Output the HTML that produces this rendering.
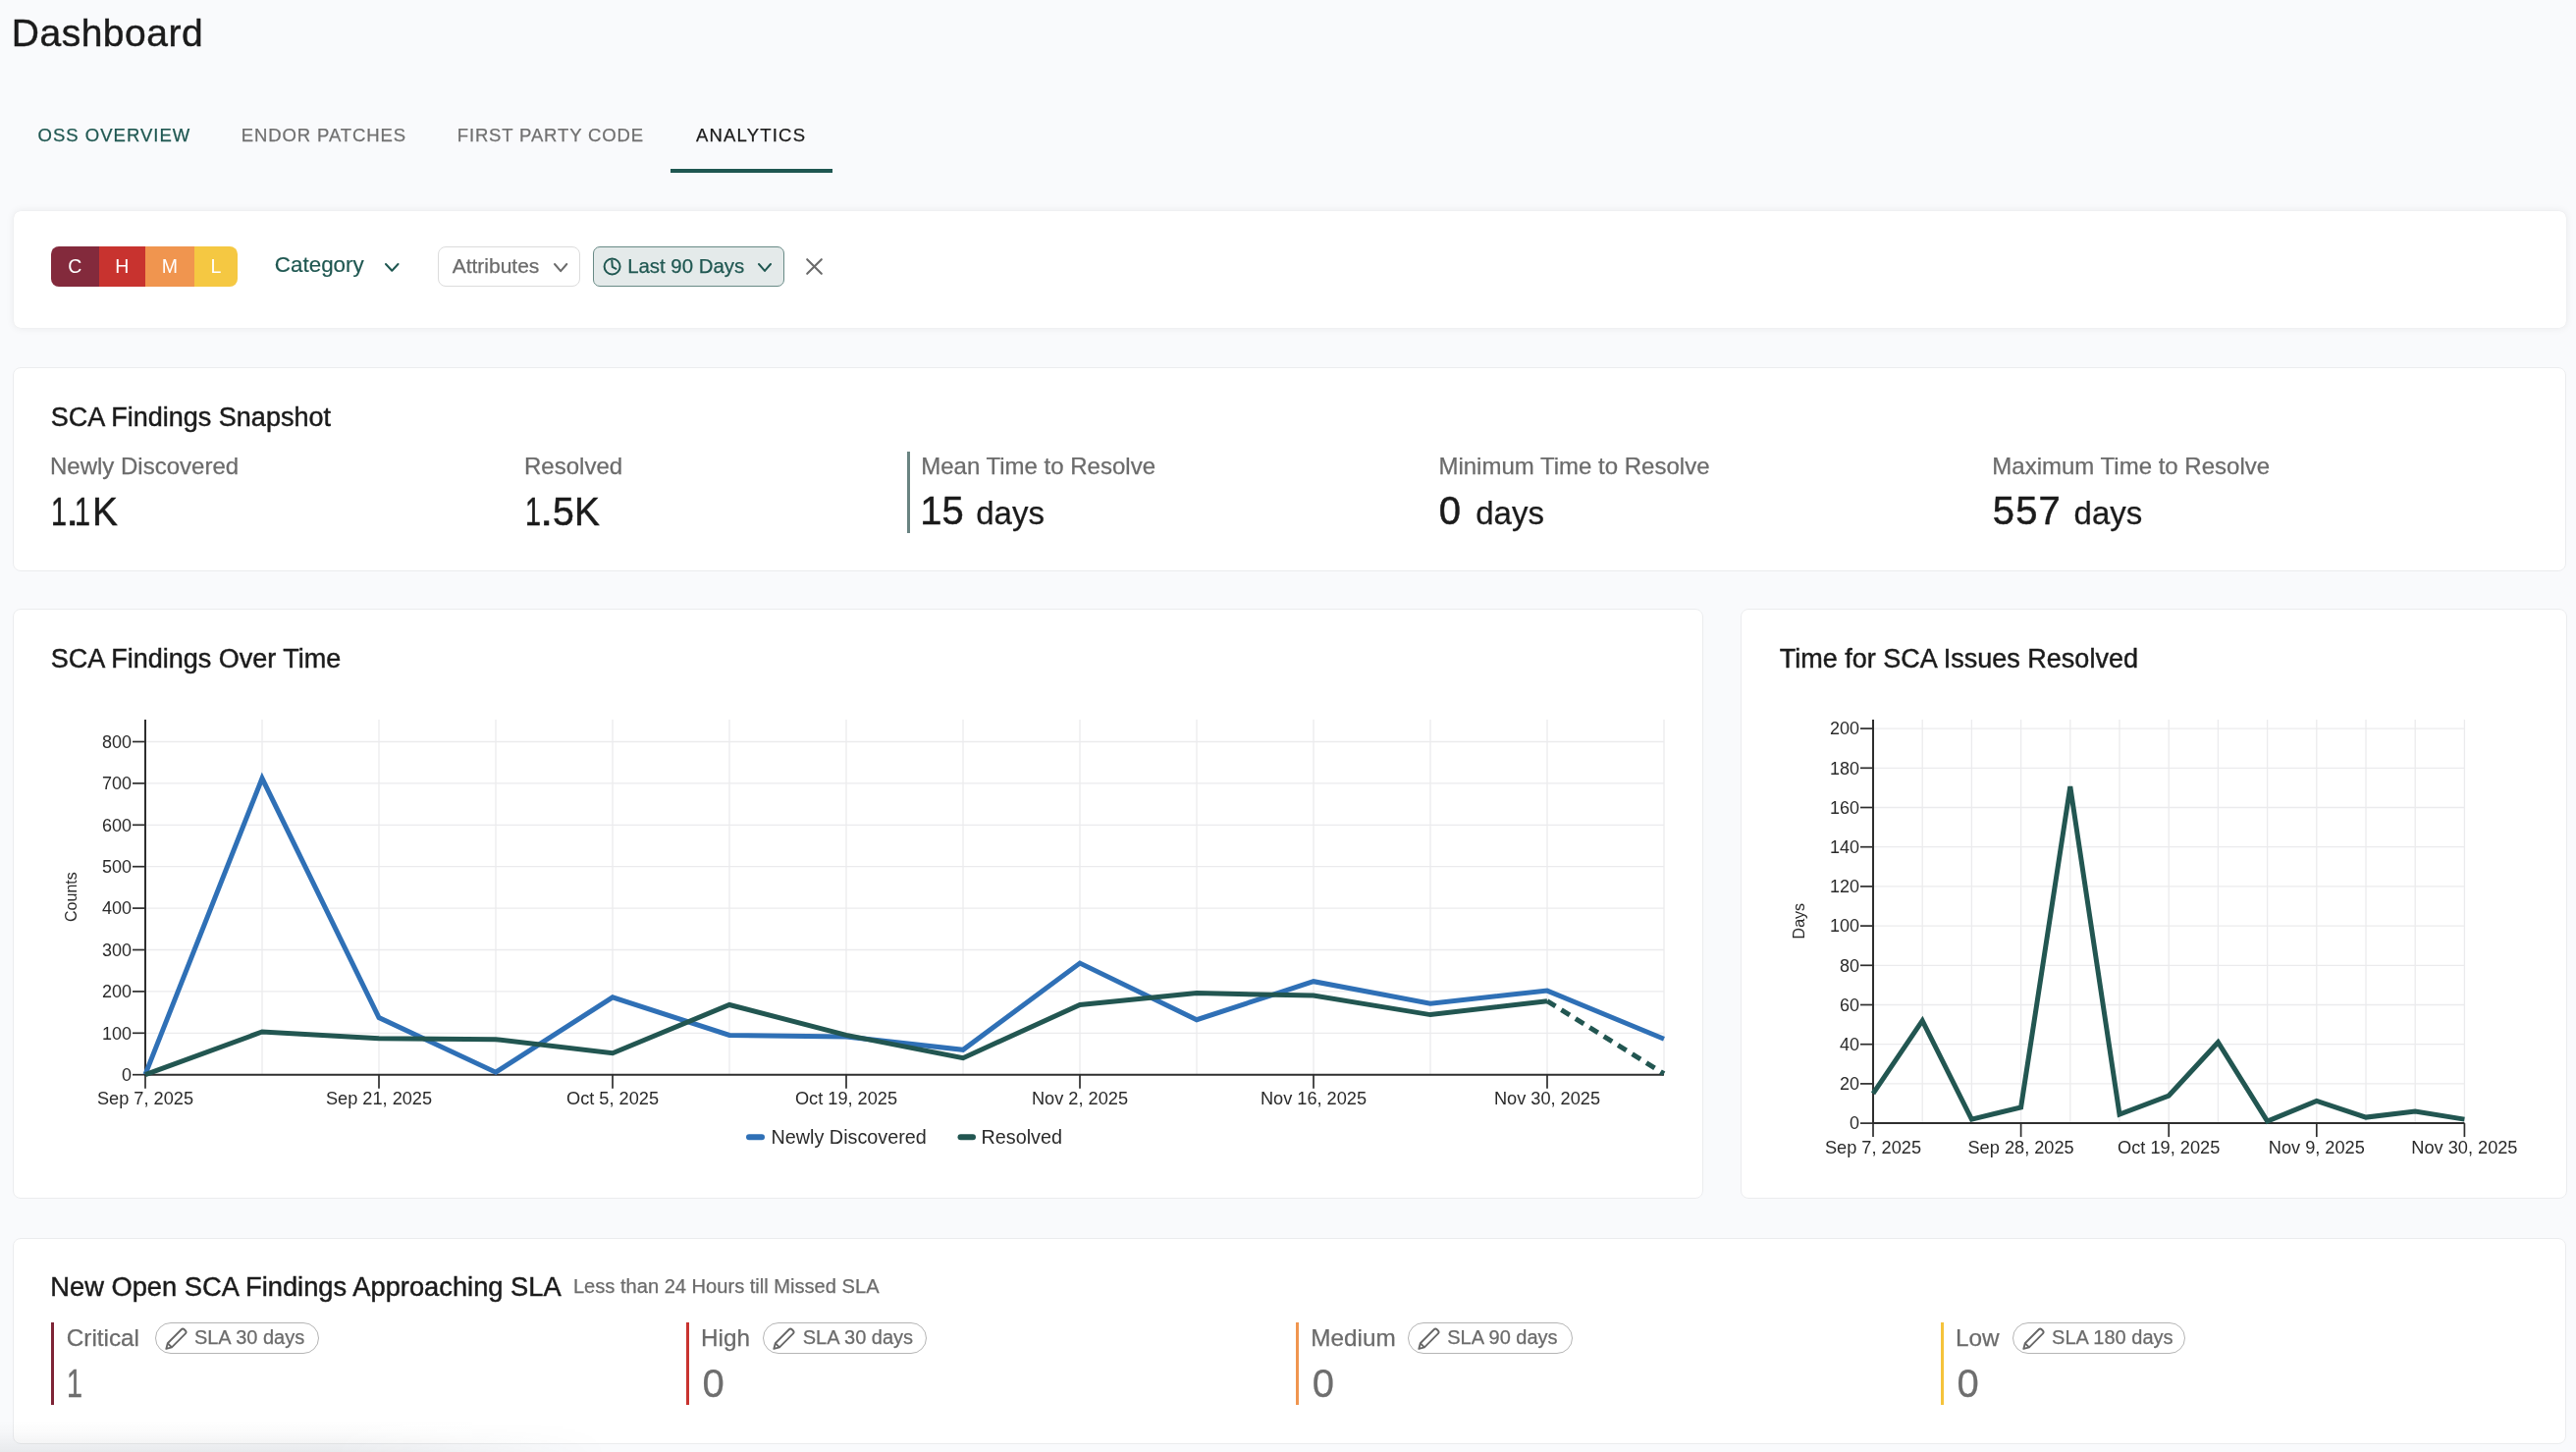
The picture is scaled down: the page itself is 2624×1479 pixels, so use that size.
<!DOCTYPE html>
<html><head><meta charset="utf-8"><style>
html,body{margin:0;padding:0;}
#root{position:absolute;left:0;top:0;width:2624px;height:1479px;will-change:transform;}
body{width:2624px;height:1479px;overflow:hidden;background:#f9fafc;position:relative;font-family:"Liberation Sans", sans-serif;}
.t{position:absolute;line-height:1;white-space:nowrap;}
svg text{font-family:"Liberation Sans", sans-serif;}
</style></head><body><div id="root">
<div class="t" style="left:11.80px;top:13.89px;font-size:39px;color:#1b1b1b;letter-spacing:0.5px;font-weight:400;-webkit-text-stroke:0.45px currentColor">Dashboard</div>
<div class="t" style="left:38.62px;top:128.84px;font-size:18.5px;color:#1f5751;letter-spacing:1px;font-weight:400;-webkit-text-stroke:0.25px currentColor">OSS OVERVIEW</div>
<div class="t" style="left:245.78px;top:128.84px;font-size:18.5px;color:#707070;letter-spacing:0.9px;font-weight:400;-webkit-text-stroke:0.25px currentColor">ENDOR PATCHES</div>
<div class="t" style="left:465.78px;top:128.84px;font-size:18.5px;color:#707070;letter-spacing:0.85px;font-weight:400;-webkit-text-stroke:0.25px currentColor">FIRST PARTY CODE</div>
<div class="t" style="left:708.96px;top:128.84px;font-size:18.5px;color:#1b1b1b;letter-spacing:1.2px;font-weight:400;-webkit-text-stroke:0.25px currentColor">ANALYTICS</div>
<div style="position:absolute;left:683px;top:172px;width:165px;height:4px;background:#1f5751"></div>
<div style="position:absolute;left:14px;top:215px;width:2600px;height:119px;background:#fff;border-radius:7px;box-shadow:0 0 8px rgba(0,0,0,0.075), 0 0 1px rgba(0,0,0,0.12)"></div>
<div style="position:absolute;left:52px;top:251px;width:190px;height:41px;border-radius:8px;overflow:hidden;display:flex"><div style="width:49px;background:#832a3c"></div><div style="width:47px;background:#c8332f"></div><div style="width:50px;background:#f0954f"></div><div style="flex:1;background:#f5c842"></div></div>
<div class="t" style="left:76.40px;top:261.99px;font-size:19.5px;color:#ffffff;letter-spacing:0px;font-weight:400;transform:translateX(-50%)">C</div>
<div class="t" style="left:124.40px;top:261.99px;font-size:19.5px;color:#ffffff;letter-spacing:0px;font-weight:400;transform:translateX(-50%)">H</div>
<div class="t" style="left:172.90px;top:261.99px;font-size:19.5px;color:#ffffff;letter-spacing:0px;font-weight:400;transform:translateX(-50%)">M</div>
<div class="t" style="left:220.00px;top:261.99px;font-size:19.5px;color:#ffffff;letter-spacing:0px;font-weight:400;transform:translateX(-50%)">L</div>
<div class="t" style="left:279.86px;top:259.04px;font-size:22.4px;color:#1f5751;letter-spacing:0px;font-weight:400;-webkit-text-stroke:0.2px currentColor">Category</div>
<svg style="position:absolute;left:390.5px;top:266.5px" width="16.5" height="10.699999999999989"><polyline points="2,2 8.25,8.699999999999989 14.5,2" fill="none" stroke="#1f5751" stroke-width="2.0" stroke-linecap="round" stroke-linejoin="round"/></svg>
<div style="position:absolute;left:446px;top:251px;width:145px;height:41px;box-sizing:border-box;border:1.5px solid #dcdcdc;border-radius:8px;background:#fff"></div>
<div class="t" style="left:460.66px;top:260.32px;font-size:21px;color:#6b6b6b;letter-spacing:0px;font-weight:400;-webkit-text-stroke:0.25px currentColor">Attributes</div>
<svg style="position:absolute;left:562.7px;top:266.5px" width="16.299999999999955" height="11.199999999999989"><polyline points="2,2 8.149999999999977,9.199999999999989 14.299999999999955,2" fill="none" stroke="#6b6b6b" stroke-width="2.0" stroke-linecap="round" stroke-linejoin="round"/></svg>
<div style="position:absolute;left:604px;top:251px;width:195px;height:41px;box-sizing:border-box;border:1.5px solid #688a86;border-radius:7px;background:#e4eaea"></div>
<svg style="position:absolute;left:610px;top:258px" width="28" height="28"><circle cx="13.6" cy="13.5" r="8" fill="none" stroke="#1f5751" stroke-width="2"/><polyline points="13.3,7.5 13.8,13.8 17.5,15.8" fill="none" stroke="#1f5751" stroke-width="2" stroke-linecap="round" stroke-linejoin="round"/></svg>
<div class="t" style="left:639.13px;top:260.83px;font-size:20.4px;color:#1f5751;letter-spacing:0px;font-weight:400;-webkit-text-stroke:0.25px currentColor">Last 90 Days</div>
<svg style="position:absolute;left:770.8px;top:266.5px" width="16.0" height="10.899999999999977"><polyline points="2,2 8.0,8.899999999999977 14.0,2" fill="none" stroke="#1f5751" stroke-width="2.0" stroke-linecap="round" stroke-linejoin="round"/></svg>
<svg style="position:absolute;left:819px;top:261px" width="22" height="22"><path d="M3.2 3.2 L17.8 17.8 M17.8 3.2 L3.2 17.8" stroke="#6b6b6b" stroke-width="2.1" stroke-linecap="round"/></svg>
<div style="position:absolute;left:13px;top:374px;width:2601px;height:208px;box-sizing:border-box;background:#fff;border:1.5px solid #ebecee;border-radius:8px"></div>
<div class="t" style="left:51.77px;top:412.14px;font-size:27px;color:#1b1b1b;letter-spacing:0px;font-weight:400;-webkit-text-stroke:0.45px currentColor">SCA Findings Snapshot</div>
<div class="t" style="left:51.03px;top:462.68px;font-size:24px;color:#6b6b6b;letter-spacing:0px;font-weight:400;-webkit-text-stroke:0.25px currentColor">Newly Discovered</div>
<div class="t" style="left:534.03px;top:462.68px;font-size:24px;color:#6b6b6b;letter-spacing:0px;font-weight:400;-webkit-text-stroke:0.25px currentColor">Resolved</div>
<div class="t" style="left:938.23px;top:462.68px;font-size:24px;color:#6b6b6b;letter-spacing:0px;font-weight:400;-webkit-text-stroke:0.25px currentColor">Mean Time to Resolve</div>
<div class="t" style="left:1465.43px;top:462.68px;font-size:24px;color:#6b6b6b;letter-spacing:0px;font-weight:400;-webkit-text-stroke:0.25px currentColor">Minimum Time to Resolve</div>
<div class="t" style="left:2029.33px;top:462.68px;font-size:24px;color:#6b6b6b;letter-spacing:0px;font-weight:400;-webkit-text-stroke:0.25px currentColor">Maximum Time to Resolve</div>
<div class="t" style="left:51.81px;top:500.94px;font-size:40px;color:#1b1b1b;transform:scaleX(0.72);transform-origin:0 0;-webkit-text-stroke:0.5px currentColor">1</div>
<div class="t" style="left:67.42px;top:500.94px;font-size:40px;color:#1b1b1b;transform:scaleX(1.2);transform-origin:0 0;-webkit-text-stroke:0.5px currentColor">.</div>
<div class="t" style="left:76.11px;top:500.94px;font-size:40px;color:#1b1b1b;transform:scaleX(0.72);transform-origin:0 0;-webkit-text-stroke:0.5px currentColor">1</div>
<div class="t" style="left:93.62px;top:500.94px;font-size:40px;color:#1b1b1b;transform:scaleX(0.97);transform-origin:0 0;-webkit-text-stroke:0.5px currentColor">K</div>
<div class="t" style="left:534.81px;top:500.94px;font-size:40px;color:#1b1b1b;transform:scaleX(0.72);transform-origin:0 0;-webkit-text-stroke:0.5px currentColor">1</div>
<div class="t" style="left:550.42px;top:500.94px;font-size:40px;color:#1b1b1b;transform:scaleX(1.2);transform-origin:0 0;-webkit-text-stroke:0.5px currentColor">.</div>
<div class="t" style="left:563.43px;top:500.94px;font-size:40px;color:#1b1b1b;transform:scaleX(0.98);transform-origin:0 0;-webkit-text-stroke:0.5px currentColor">5</div>
<div class="t" style="left:585.32px;top:500.94px;font-size:40px;color:#1b1b1b;transform:scaleX(0.97);transform-origin:0 0;-webkit-text-stroke:0.5px currentColor">K</div>
<div class="t" style="left:937.15px;top:500.44px;font-size:40px;color:#1b1b1b;letter-spacing:0px;font-weight:400;-webkit-text-stroke:0.5px currentColor">15</div>
<div class="t" style="left:994.21px;top:506.37px;font-size:33px;color:#1b1b1b;letter-spacing:0px;font-weight:400;-webkit-text-stroke:0.25px currentColor">days</div>
<div class="t" style="left:1465.84px;top:500.44px;font-size:40px;color:#1b1b1b;letter-spacing:0px;font-weight:400;-webkit-text-stroke:0.5px currentColor">0</div>
<div class="t" style="left:1503.21px;top:506.37px;font-size:33px;color:#1b1b1b;letter-spacing:0px;font-weight:400;-webkit-text-stroke:0.25px currentColor">days</div>
<div class="t" style="left:2029.70px;top:500.44px;font-size:40px;color:#1b1b1b;letter-spacing:1.2px;font-weight:400;-webkit-text-stroke:0.5px currentColor">557</div>
<div class="t" style="left:2112.61px;top:506.37px;font-size:33px;color:#1b1b1b;letter-spacing:0px;font-weight:400;-webkit-text-stroke:0.25px currentColor">days</div>
<div style="position:absolute;left:924px;top:460px;width:3px;height:83px;background:#6a8482"></div>
<div style="position:absolute;left:13px;top:620px;width:1722px;height:601px;box-sizing:border-box;background:#fff;border:1.5px solid #ebecee;border-radius:8px"></div>
<div style="position:absolute;left:1773px;top:620px;width:842px;height:601px;box-sizing:border-box;background:#fff;border:1.5px solid #ebecee;border-radius:8px"></div>
<div class="t" style="left:51.77px;top:658.44px;font-size:27px;color:#1b1b1b;letter-spacing:0px;font-weight:400;-webkit-text-stroke:0.45px currentColor">SCA Findings Over Time</div>
<div class="t" style="left:1812.79px;top:658.14px;font-size:27px;color:#1b1b1b;letter-spacing:0px;font-weight:400;-webkit-text-stroke:0.45px currentColor">Time for SCA Issues Resolved</div>
<div style="position:absolute;left:13px;top:1261px;width:2601px;height:210px;box-sizing:border-box;background:#fff;border:1.5px solid #ebecee;border-radius:8px"></div>
<div class="t" style="left:51.26px;top:1297.29px;font-size:27.3px;color:#1b1b1b;letter-spacing:0px;font-weight:400;-webkit-text-stroke:0.45px currentColor">New Open SCA Findings Approaching SLA</div>
<div class="t" style="left:583.95px;top:1300.39px;font-size:20.1px;color:#6b6b6b;letter-spacing:0px;font-weight:400;-webkit-text-stroke:0.25px currentColor">Less than 24 Hours till Missed SLA</div>
<div style="position:absolute;left:52px;top:1347px;width:3px;height:84px;background:#7e2436"></div>
<div class="t" style="left:67.77px;top:1351.13px;font-size:24.3px;color:#6b6b6b;letter-spacing:0px;font-weight:400;-webkit-text-stroke:0.25px currentColor">Critical</div>
<div style="position:absolute;left:157.5px;top:1347px;width:167.0px;height:32px;box-sizing:border-box;border:1.5px solid #b5b5b5;border-radius:16px"></div>
<svg style="position:absolute;left:166.5px;top:1349px" width="28" height="28"><path transform="translate(2.3,24.9) scale(0.93) translate(-3,-24.5)" d="M3 24.5 L4.6 18.4 L19.6 3.4 Q21.2 1.8 22.8 3.4 L24.1 4.7 Q25.7 6.3 24.1 7.9 L9.1 22.9 Z M4.6 18.4 L9.1 22.9" fill="none" stroke="#666" stroke-width="2" stroke-linejoin="round"/></svg>
<div class="t" style="left:197.89px;top:1351.87px;font-size:20px;color:#6b6b6b;letter-spacing:0px;font-weight:400;-webkit-text-stroke:0.25px currentColor">SLA 30 days</div>
<div class="t" style="left:67.81px;top:1389.44px;font-size:40px;color:#6e6e6e;transform:scaleX(0.72);transform-origin:0 0;-webkit-text-stroke:0.5px currentColor">1</div>
<div style="position:absolute;left:699px;top:1347px;width:3px;height:84px;background:#c8332f"></div>
<div class="t" style="left:714.01px;top:1351.13px;font-size:24.3px;color:#6b6b6b;letter-spacing:0px;font-weight:400;-webkit-text-stroke:0.25px currentColor">High</div>
<div style="position:absolute;left:777.4px;top:1347px;width:166.70000000000005px;height:32px;box-sizing:border-box;border:1.5px solid #b5b5b5;border-radius:16px"></div>
<svg style="position:absolute;left:786.4px;top:1349px" width="28" height="28"><path transform="translate(2.3,24.9) scale(0.93) translate(-3,-24.5)" d="M3 24.5 L4.6 18.4 L19.6 3.4 Q21.2 1.8 22.8 3.4 L24.1 4.7 Q25.7 6.3 24.1 7.9 L9.1 22.9 Z M4.6 18.4 L9.1 22.9" fill="none" stroke="#666" stroke-width="2" stroke-linejoin="round"/></svg>
<div class="t" style="left:817.79px;top:1351.87px;font-size:20px;color:#6b6b6b;letter-spacing:0px;font-weight:400;-webkit-text-stroke:0.25px currentColor">SLA 30 days</div>
<div class="t" style="left:715.44px;top:1389.44px;font-size:40px;color:#6e6e6e;letter-spacing:0px;font-weight:400;-webkit-text-stroke:0.25px currentColor">0</div>
<div style="position:absolute;left:1320.3px;top:1347px;width:3.0px;height:84px;background:#f0954f"></div>
<div class="t" style="left:1335.31px;top:1351.13px;font-size:24.3px;color:#6b6b6b;letter-spacing:0px;font-weight:400;-webkit-text-stroke:0.25px currentColor">Medium</div>
<div style="position:absolute;left:1433.9px;top:1347px;width:167.79999999999995px;height:32px;box-sizing:border-box;border:1.5px solid #b5b5b5;border-radius:16px"></div>
<svg style="position:absolute;left:1442.9px;top:1349px" width="28" height="28"><path transform="translate(2.3,24.9) scale(0.93) translate(-3,-24.5)" d="M3 24.5 L4.6 18.4 L19.6 3.4 Q21.2 1.8 22.8 3.4 L24.1 4.7 Q25.7 6.3 24.1 7.9 L9.1 22.9 Z M4.6 18.4 L9.1 22.9" fill="none" stroke="#666" stroke-width="2" stroke-linejoin="round"/></svg>
<div class="t" style="left:1474.29px;top:1351.87px;font-size:20px;color:#6b6b6b;letter-spacing:0px;font-weight:400;-webkit-text-stroke:0.25px currentColor">SLA 90 days</div>
<div class="t" style="left:1336.74px;top:1389.44px;font-size:40px;color:#6e6e6e;letter-spacing:0px;font-weight:400;-webkit-text-stroke:0.25px currentColor">0</div>
<div style="position:absolute;left:1977px;top:1347px;width:3px;height:84px;background:#f5c33b"></div>
<div class="t" style="left:1992.01px;top:1351.13px;font-size:24.3px;color:#6b6b6b;letter-spacing:0px;font-weight:400;-webkit-text-stroke:0.25px currentColor">Low</div>
<div style="position:absolute;left:2049.7px;top:1347px;width:175.9000000000001px;height:32px;box-sizing:border-box;border:1.5px solid #b5b5b5;border-radius:16px"></div>
<svg style="position:absolute;left:2058.7px;top:1349px" width="28" height="28"><path transform="translate(2.3,24.9) scale(0.93) translate(-3,-24.5)" d="M3 24.5 L4.6 18.4 L19.6 3.4 Q21.2 1.8 22.8 3.4 L24.1 4.7 Q25.7 6.3 24.1 7.9 L9.1 22.9 Z M4.6 18.4 L9.1 22.9" fill="none" stroke="#666" stroke-width="2" stroke-linejoin="round"/></svg>
<div class="t" style="left:2090.09px;top:1351.87px;font-size:20px;color:#6b6b6b;letter-spacing:0px;font-weight:400;-webkit-text-stroke:0.25px currentColor">SLA 180 days</div>
<div class="t" style="left:1993.44px;top:1389.44px;font-size:40px;color:#6e6e6e;letter-spacing:0px;font-weight:400;-webkit-text-stroke:0.25px currentColor">0</div>
<div style="position:absolute;left:0px;top:1447px;width:620px;height:32px;background:linear-gradient(to bottom, rgba(30,40,50,0), rgba(30,40,50,0.02) 40%, rgba(30,40,50,0.075));-webkit-mask-image:linear-gradient(to right, #000 55%, transparent)"></div>
<svg style="position:absolute;left:0;top:0" width="2624" height="1479">
<line x1="267" y1="733" x2="267" y2="1094.7" stroke="#ebebed" stroke-width="1.3"/>
<line x1="386" y1="733" x2="386" y2="1094.7" stroke="#ebebed" stroke-width="1.3"/>
<line x1="505" y1="733" x2="505" y2="1094.7" stroke="#ebebed" stroke-width="1.3"/>
<line x1="624" y1="733" x2="624" y2="1094.7" stroke="#ebebed" stroke-width="1.3"/>
<line x1="743" y1="733" x2="743" y2="1094.7" stroke="#ebebed" stroke-width="1.3"/>
<line x1="862" y1="733" x2="862" y2="1094.7" stroke="#ebebed" stroke-width="1.3"/>
<line x1="981" y1="733" x2="981" y2="1094.7" stroke="#ebebed" stroke-width="1.3"/>
<line x1="1100" y1="733" x2="1100" y2="1094.7" stroke="#ebebed" stroke-width="1.3"/>
<line x1="1219" y1="733" x2="1219" y2="1094.7" stroke="#ebebed" stroke-width="1.3"/>
<line x1="1338" y1="733" x2="1338" y2="1094.7" stroke="#ebebed" stroke-width="1.3"/>
<line x1="1457" y1="733" x2="1457" y2="1094.7" stroke="#ebebed" stroke-width="1.3"/>
<line x1="1576" y1="733" x2="1576" y2="1094.7" stroke="#ebebed" stroke-width="1.3"/>
<line x1="1695" y1="733" x2="1695" y2="1094.7" stroke="#ebebed" stroke-width="1.3"/>
<line x1="148" y1="1052.3" x2="1695" y2="1052.3" stroke="#ebebed" stroke-width="1.3"/>
<line x1="148" y1="1009.9000000000001" x2="1695" y2="1009.9000000000001" stroke="#ebebed" stroke-width="1.3"/>
<line x1="148" y1="967.5" x2="1695" y2="967.5" stroke="#ebebed" stroke-width="1.3"/>
<line x1="148" y1="925.1" x2="1695" y2="925.1" stroke="#ebebed" stroke-width="1.3"/>
<line x1="148" y1="882.7" x2="1695" y2="882.7" stroke="#ebebed" stroke-width="1.3"/>
<line x1="148" y1="840.3000000000001" x2="1695" y2="840.3000000000001" stroke="#ebebed" stroke-width="1.3"/>
<line x1="148" y1="797.9000000000001" x2="1695" y2="797.9000000000001" stroke="#ebebed" stroke-width="1.3"/>
<line x1="148" y1="755.5" x2="1695" y2="755.5" stroke="#ebebed" stroke-width="1.3"/>
<line x1="148" y1="733" x2="148" y2="1095.7" stroke="#2e2e2e" stroke-width="2"/>
<line x1="147" y1="1094.7" x2="1695" y2="1094.7" stroke="#2e2e2e" stroke-width="2"/>
<line x1="135" y1="1094.7" x2="148" y2="1094.7" stroke="#2e2e2e" stroke-width="1.7"/>
<text x="134" y="1101.0" text-anchor="end" font-size="18" fill="#2a2a2a">0</text>
<line x1="135" y1="1052.3" x2="148" y2="1052.3" stroke="#2e2e2e" stroke-width="1.7"/>
<text x="134" y="1058.6" text-anchor="end" font-size="18" fill="#2a2a2a">100</text>
<line x1="135" y1="1009.9000000000001" x2="148" y2="1009.9000000000001" stroke="#2e2e2e" stroke-width="1.7"/>
<text x="134" y="1016.2" text-anchor="end" font-size="18" fill="#2a2a2a">200</text>
<line x1="135" y1="967.5" x2="148" y2="967.5" stroke="#2e2e2e" stroke-width="1.7"/>
<text x="134" y="973.8" text-anchor="end" font-size="18" fill="#2a2a2a">300</text>
<line x1="135" y1="925.1" x2="148" y2="925.1" stroke="#2e2e2e" stroke-width="1.7"/>
<text x="134" y="931.4" text-anchor="end" font-size="18" fill="#2a2a2a">400</text>
<line x1="135" y1="882.7" x2="148" y2="882.7" stroke="#2e2e2e" stroke-width="1.7"/>
<text x="134" y="889.0" text-anchor="end" font-size="18" fill="#2a2a2a">500</text>
<line x1="135" y1="840.3000000000001" x2="148" y2="840.3000000000001" stroke="#2e2e2e" stroke-width="1.7"/>
<text x="134" y="846.6" text-anchor="end" font-size="18" fill="#2a2a2a">600</text>
<line x1="135" y1="797.9000000000001" x2="148" y2="797.9000000000001" stroke="#2e2e2e" stroke-width="1.7"/>
<text x="134" y="804.2" text-anchor="end" font-size="18" fill="#2a2a2a">700</text>
<line x1="135" y1="755.5" x2="148" y2="755.5" stroke="#2e2e2e" stroke-width="1.7"/>
<text x="134" y="761.8" text-anchor="end" font-size="18" fill="#2a2a2a">800</text>
<line x1="148" y1="1094.7" x2="148" y2="1108.7" stroke="#2e2e2e" stroke-width="1.7"/>
<text x="148" y="1125" text-anchor="middle" font-size="18.2" fill="#2a2a2a">Sep 7, 2025</text>
<line x1="386" y1="1094.7" x2="386" y2="1108.7" stroke="#2e2e2e" stroke-width="1.7"/>
<text x="386" y="1125" text-anchor="middle" font-size="18.2" fill="#2a2a2a">Sep 21, 2025</text>
<line x1="624" y1="1094.7" x2="624" y2="1108.7" stroke="#2e2e2e" stroke-width="1.7"/>
<text x="624" y="1125" text-anchor="middle" font-size="18.2" fill="#2a2a2a">Oct 5, 2025</text>
<line x1="862" y1="1094.7" x2="862" y2="1108.7" stroke="#2e2e2e" stroke-width="1.7"/>
<text x="862" y="1125" text-anchor="middle" font-size="18.2" fill="#2a2a2a">Oct 19, 2025</text>
<line x1="1100" y1="1094.7" x2="1100" y2="1108.7" stroke="#2e2e2e" stroke-width="1.7"/>
<text x="1100" y="1125" text-anchor="middle" font-size="18.2" fill="#2a2a2a">Nov 2, 2025</text>
<line x1="1338" y1="1094.7" x2="1338" y2="1108.7" stroke="#2e2e2e" stroke-width="1.7"/>
<text x="1338" y="1125" text-anchor="middle" font-size="18.2" fill="#2a2a2a">Nov 16, 2025</text>
<line x1="1576" y1="1094.7" x2="1576" y2="1108.7" stroke="#2e2e2e" stroke-width="1.7"/>
<text x="1576" y="1125" text-anchor="middle" font-size="18.2" fill="#2a2a2a">Nov 30, 2025</text>
<text transform="translate(78.3,913.6) rotate(-90)" text-anchor="middle" font-size="16" fill="#2a2a2a">Counts</text>
<polyline points="148.0,1094.3 267.0,792.8 386.0,1036.6 505.0,1092.2 624.0,1015.8 743.0,1054.4 862.0,1056.1 981.0,1069.3 1100.0,981.1 1219.0,1038.7 1338.0,999.7 1457.0,1022.2 1576.0,1009.1 1695.0,1058.2" fill="none" stroke="#2f70b6" stroke-width="5" stroke-linejoin="miter"/>
<polyline points="148.0,1094.7 267.0,1051.0 386.0,1057.8 505.0,1058.7 624.0,1072.7 743.0,1023.5 862.0,1054.4 981.0,1077.7 1100.0,1023.5 1219.0,1011.6 1338.0,1014.1 1457.0,1033.6 1576.0,1019.7" fill="none" stroke="#225651" stroke-width="5" stroke-linejoin="miter"/>
<line x1="1576" y1="1019.652" x2="1695" y2="1093.7" stroke="#225651" stroke-width="5" stroke-dasharray="10,7"/>
<line x1="763" y1="1158.3" x2="776" y2="1158.3" stroke="#2f70b6" stroke-width="6" stroke-linecap="round"/>
<line x1="978.5" y1="1158.3" x2="991" y2="1158.3" stroke="#225651" stroke-width="6" stroke-linecap="round"/>
<text x="785.5" y="1164.6" font-size="19.8" fill="#2a2a2a">Newly Discovered</text>
<text x="999.5" y="1164.6" font-size="19.8" fill="#2a2a2a">Resolved</text>
<line x1="1958.2" y1="733" x2="1958.2" y2="1144.1" stroke="#ebebed" stroke-width="1.3"/>
<line x1="2008.4" y1="733" x2="2008.4" y2="1144.1" stroke="#ebebed" stroke-width="1.3"/>
<line x1="2058.6" y1="733" x2="2058.6" y2="1144.1" stroke="#ebebed" stroke-width="1.3"/>
<line x1="2108.8" y1="733" x2="2108.8" y2="1144.1" stroke="#ebebed" stroke-width="1.3"/>
<line x1="2159.0" y1="733" x2="2159.0" y2="1144.1" stroke="#ebebed" stroke-width="1.3"/>
<line x1="2209.2" y1="733" x2="2209.2" y2="1144.1" stroke="#ebebed" stroke-width="1.3"/>
<line x1="2259.4" y1="733" x2="2259.4" y2="1144.1" stroke="#ebebed" stroke-width="1.3"/>
<line x1="2309.6" y1="733" x2="2309.6" y2="1144.1" stroke="#ebebed" stroke-width="1.3"/>
<line x1="2359.8" y1="733" x2="2359.8" y2="1144.1" stroke="#ebebed" stroke-width="1.3"/>
<line x1="2410.0" y1="733" x2="2410.0" y2="1144.1" stroke="#ebebed" stroke-width="1.3"/>
<line x1="2460.2" y1="733" x2="2460.2" y2="1144.1" stroke="#ebebed" stroke-width="1.3"/>
<line x1="2510.4" y1="733" x2="2510.4" y2="1144.1" stroke="#ebebed" stroke-width="1.3"/>
<line x1="1908" y1="1103.8999999999999" x2="2510.4" y2="1103.8999999999999" stroke="#ebebed" stroke-width="1.3"/>
<line x1="1908" y1="1063.6999999999998" x2="2510.4" y2="1063.6999999999998" stroke="#ebebed" stroke-width="1.3"/>
<line x1="1908" y1="1023.4999999999999" x2="2510.4" y2="1023.4999999999999" stroke="#ebebed" stroke-width="1.3"/>
<line x1="1908" y1="983.3" x2="2510.4" y2="983.3" stroke="#ebebed" stroke-width="1.3"/>
<line x1="1908" y1="943.0999999999999" x2="2510.4" y2="943.0999999999999" stroke="#ebebed" stroke-width="1.3"/>
<line x1="1908" y1="902.8999999999999" x2="2510.4" y2="902.8999999999999" stroke="#ebebed" stroke-width="1.3"/>
<line x1="1908" y1="862.6999999999999" x2="2510.4" y2="862.6999999999999" stroke="#ebebed" stroke-width="1.3"/>
<line x1="1908" y1="822.5" x2="2510.4" y2="822.5" stroke="#ebebed" stroke-width="1.3"/>
<line x1="1908" y1="782.3" x2="2510.4" y2="782.3" stroke="#ebebed" stroke-width="1.3"/>
<line x1="1908" y1="742.0999999999999" x2="2510.4" y2="742.0999999999999" stroke="#ebebed" stroke-width="1.3"/>
<line x1="1908" y1="733" x2="1908" y2="1145.1" stroke="#2e2e2e" stroke-width="2"/>
<line x1="1907" y1="1144.1" x2="2510.4" y2="1144.1" stroke="#2e2e2e" stroke-width="2"/>
<line x1="1895" y1="1144.1" x2="1908" y2="1144.1" stroke="#2e2e2e" stroke-width="1.7"/>
<text x="1894" y="1150.3999999999999" text-anchor="end" font-size="18" fill="#2a2a2a">0</text>
<line x1="1895" y1="1103.8999999999999" x2="1908" y2="1103.8999999999999" stroke="#2e2e2e" stroke-width="1.7"/>
<text x="1894" y="1110.1999999999998" text-anchor="end" font-size="18" fill="#2a2a2a">20</text>
<line x1="1895" y1="1063.6999999999998" x2="1908" y2="1063.6999999999998" stroke="#2e2e2e" stroke-width="1.7"/>
<text x="1894" y="1069.9999999999998" text-anchor="end" font-size="18" fill="#2a2a2a">40</text>
<line x1="1895" y1="1023.4999999999999" x2="1908" y2="1023.4999999999999" stroke="#2e2e2e" stroke-width="1.7"/>
<text x="1894" y="1029.8" text-anchor="end" font-size="18" fill="#2a2a2a">60</text>
<line x1="1895" y1="983.3" x2="1908" y2="983.3" stroke="#2e2e2e" stroke-width="1.7"/>
<text x="1894" y="989.5999999999999" text-anchor="end" font-size="18" fill="#2a2a2a">80</text>
<line x1="1895" y1="943.0999999999999" x2="1908" y2="943.0999999999999" stroke="#2e2e2e" stroke-width="1.7"/>
<text x="1894" y="949.3999999999999" text-anchor="end" font-size="18" fill="#2a2a2a">100</text>
<line x1="1895" y1="902.8999999999999" x2="1908" y2="902.8999999999999" stroke="#2e2e2e" stroke-width="1.7"/>
<text x="1894" y="909.1999999999998" text-anchor="end" font-size="18" fill="#2a2a2a">120</text>
<line x1="1895" y1="862.6999999999999" x2="1908" y2="862.6999999999999" stroke="#2e2e2e" stroke-width="1.7"/>
<text x="1894" y="868.9999999999999" text-anchor="end" font-size="18" fill="#2a2a2a">140</text>
<line x1="1895" y1="822.5" x2="1908" y2="822.5" stroke="#2e2e2e" stroke-width="1.7"/>
<text x="1894" y="828.8" text-anchor="end" font-size="18" fill="#2a2a2a">160</text>
<line x1="1895" y1="782.3" x2="1908" y2="782.3" stroke="#2e2e2e" stroke-width="1.7"/>
<text x="1894" y="788.5999999999999" text-anchor="end" font-size="18" fill="#2a2a2a">180</text>
<line x1="1895" y1="742.0999999999999" x2="1908" y2="742.0999999999999" stroke="#2e2e2e" stroke-width="1.7"/>
<text x="1894" y="748.3999999999999" text-anchor="end" font-size="18" fill="#2a2a2a">200</text>
<line x1="1908.0" y1="1144.1" x2="1908.0" y2="1158.1" stroke="#2e2e2e" stroke-width="1.7"/>
<text x="1908.0" y="1174.5" text-anchor="middle" font-size="18.2" fill="#2a2a2a">Sep 7, 2025</text>
<line x1="2058.6" y1="1144.1" x2="2058.6" y2="1158.1" stroke="#2e2e2e" stroke-width="1.7"/>
<text x="2058.6" y="1174.5" text-anchor="middle" font-size="18.2" fill="#2a2a2a">Sep 28, 2025</text>
<line x1="2209.2" y1="1144.1" x2="2209.2" y2="1158.1" stroke="#2e2e2e" stroke-width="1.7"/>
<text x="2209.2" y="1174.5" text-anchor="middle" font-size="18.2" fill="#2a2a2a">Oct 19, 2025</text>
<line x1="2359.8" y1="1144.1" x2="2359.8" y2="1158.1" stroke="#2e2e2e" stroke-width="1.7"/>
<text x="2359.8" y="1174.5" text-anchor="middle" font-size="18.2" fill="#2a2a2a">Nov 9, 2025</text>
<line x1="2510.4" y1="1144.1" x2="2510.4" y2="1158.1" stroke="#2e2e2e" stroke-width="1.7"/>
<text x="2510.4" y="1174.5" text-anchor="middle" font-size="18.2" fill="#2a2a2a">Nov 30, 2025</text>
<text transform="translate(1838.3,938.2) rotate(-90)" text-anchor="middle" font-size="16" fill="#2a2a2a">Days</text>
<polyline points="1908.0,1113.9 1958.2,1039.6 2008.4,1140.1 2058.6,1128.0 2108.8,801.2 2159.0,1135.1 2209.2,1116.0 2259.4,1061.7 2309.6,1142.1 2359.8,1121.4 2410.0,1138.1 2460.2,1132.0 2510.4,1140.1" fill="none" stroke="#225651" stroke-width="5" stroke-linejoin="miter" stroke-miterlimit="4"/>
</svg>
</div></body></html>
